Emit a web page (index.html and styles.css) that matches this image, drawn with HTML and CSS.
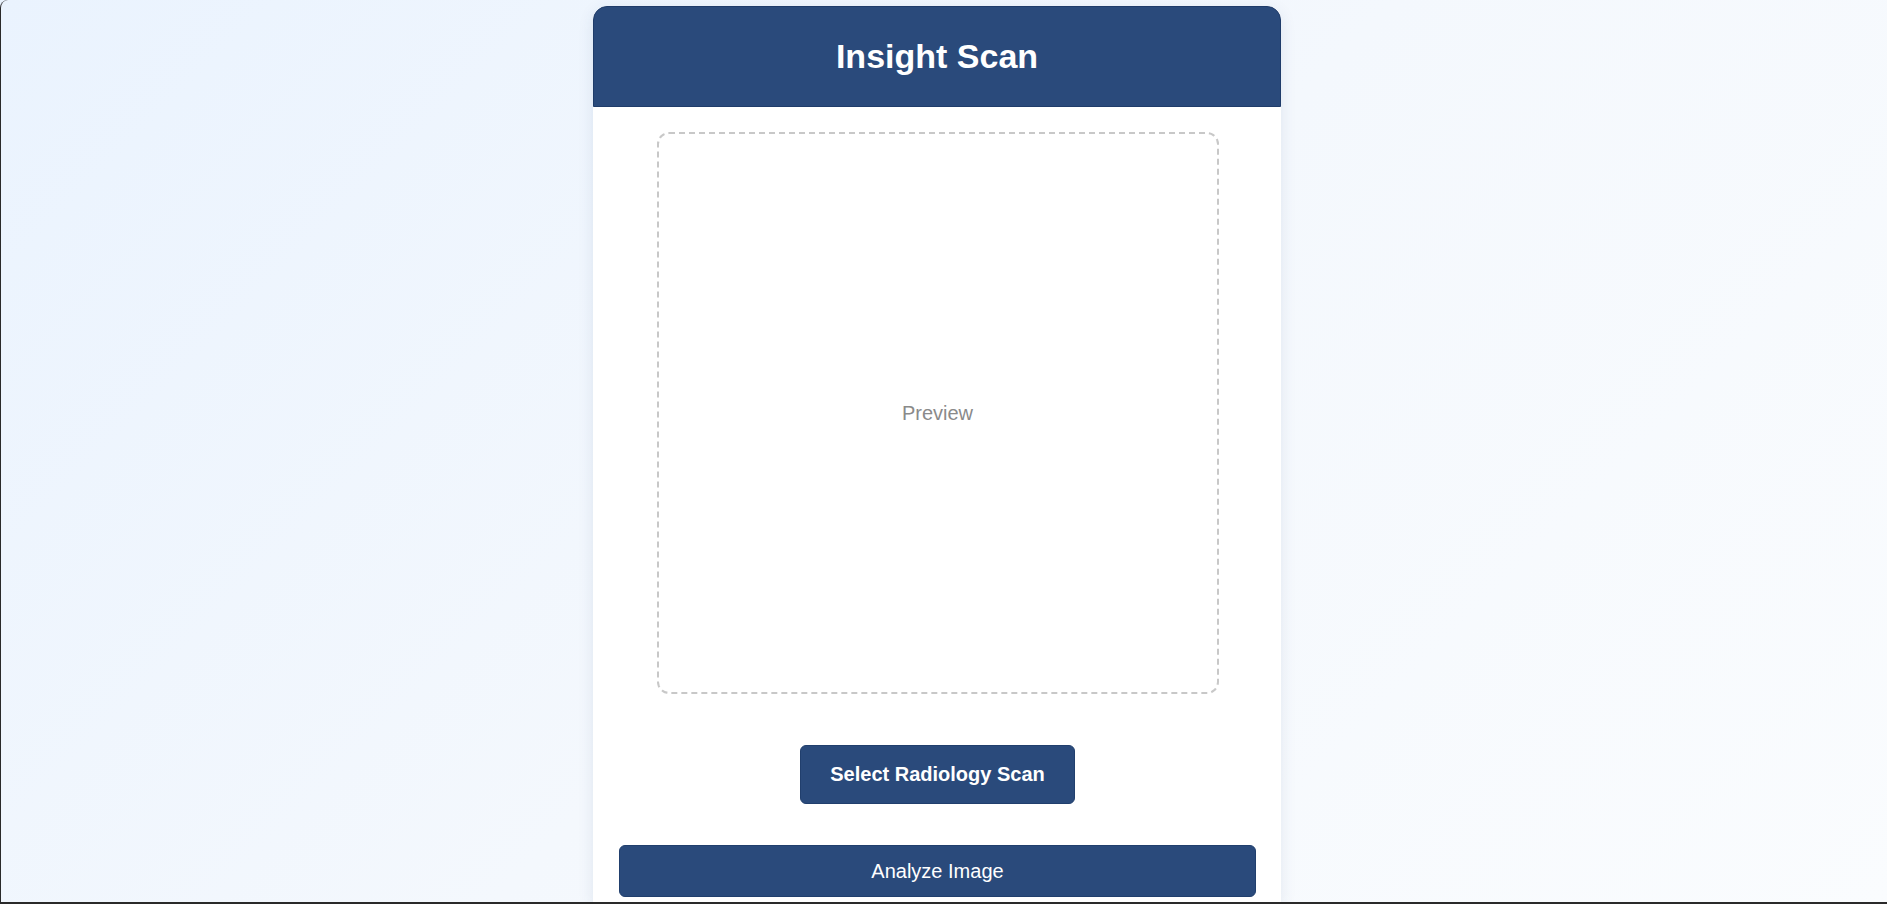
FILE: index.html
```html
<!DOCTYPE html>
<html lang="en">
<head>
<meta charset="utf-8">
<title>Insight Scan</title>
<link rel="stylesheet" href="styles.css">
</head>
<body>
<div class="frame"></div>
<main class="card">
  <header class="card-header">
    <h1 class="title">Insight Scan</h1>
  </header>
  <section class="card-body">
    <div class="preview">Preview</div>
    <button class="btn-select" type="button">Select Radiology Scan</button>
    <button class="btn-analyze" type="button">Analyze Image</button>
  </section>
</main>
</body>
</html>
```

FILE: styles.css
```css
* { box-sizing: border-box; }
html, body { height: 100%; }
body {
  margin: 0;
  font-family: "Liberation Sans", Arial, sans-serif;
  background: linear-gradient(135deg, #eaf3fe 0%, #f4f8fd 50%, #fafcfe 100%);
  display: flex;
  justify-content: center;
  align-items: flex-start;
  overflow: hidden;
}
.frame {
  position: fixed;
  inset: 0;
  border-left: 1px solid #2a2a2a;
  border-bottom: 2px solid #2a2a2a;
  border-top-left-radius: 8px;
  pointer-events: none;
  z-index: 10;
}
.card {
  width: 688px;
  margin-top: 6px;
  margin-right: 13px;
  background: #ffffff;
  border-radius: 14px 14px 0 0;
  box-shadow: 0 4px 16px rgba(40, 70, 120, 0.10);
  display: flex;
  flex-direction: column;
}
.card-header {
  background: #2a4a7b;
  border: 1px solid #1f3c6a;
  border-radius: 14px 14px 0 0;
  height: 101px;
  display: flex;
  align-items: center;
  justify-content: center;
}
.title {
  margin: 0;
  color: #ffffff;
  font-size: 34px;
  font-weight: 700;
}
.card-body {
  padding: 25px 25px 7px 26px;
  display: flex;
  flex-direction: column;
  align-items: center;
}
.preview {
  width: 562px;
  height: 562px;
  border: 2px dashed #c8c8c8;
  border-radius: 12px;
  display: flex;
  align-items: center;
  justify-content: center;
  color: #8a8a8a;
  font-size: 20px;
}
.btn-select {
  margin-top: 51px;
  height: 59px;
  padding: 0 29px;
  background: #2a4a7b;
  color: #ffffff;
  border: 1px solid #213f6d;
  border-radius: 6px;
  font-family: inherit;
  font-size: 20px;
  font-weight: 700;
}
.btn-analyze {
  margin-top: 41px;
  width: 637px;
  height: 52px;
  background: #2a4a7b;
  color: #ffffff;
  border: 1px solid #213f6d;
  border-radius: 6px;
  font-family: inherit;
  font-size: 20px;
  font-weight: 400;
}
```
